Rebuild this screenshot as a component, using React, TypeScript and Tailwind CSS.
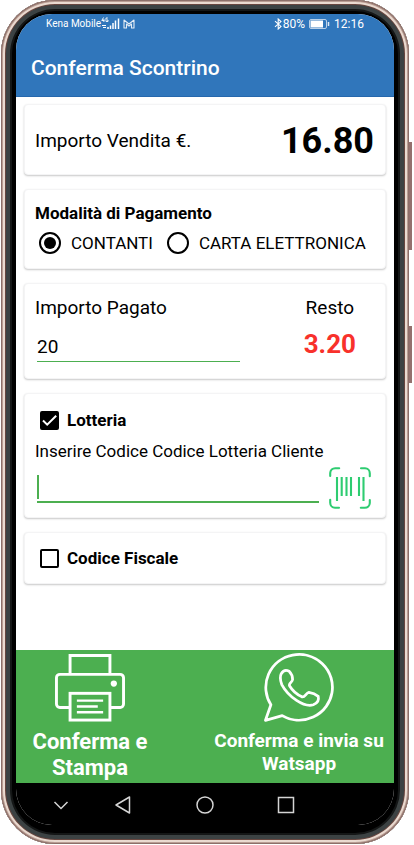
import { useState, type ReactNode } from "react";

function Card({ children, className = "" }: { children: ReactNode; className?: string }) {
  return (
    <section
      className={`rounded-sm border border-zinc-100 bg-white pr-[11px] pl-[10px] shadow-[0_1px_2px_rgba(0,0,0,0.22)] ${className}`}
    >
      {children}
    </section>
  );
}

function SignalIcon() {
  return (
    <svg width="19" height="13" viewBox="0 0 19 13" fill="none" stroke="#fff" aria-hidden="true">
      <path d="M2.500 0.500L0.800 3.500h2.600M2.900 2v3M6.800 1H5v3.500h2V3H6" strokeWidth="0.900" />
      <path d="M1 8.500h4M2 10.500h3" strokeWidth="1.200" />
      <path d="M7 12v-2M9.500 12V8.500M12 12V6M14.500 12V3.500M17.500 12V1.500" strokeWidth="1.500" />
    </svg>
  );
}

function MailIcon() {
  return (
    <svg width="12" height="10" viewBox="0 0 12 10" fill="none" stroke="#e4edf6" strokeWidth="1.100" aria-hidden="true">
      <path d="M3.500 9H1V1L6 5 11 1V9H8.500V5L6 7.200 3.500 5Z" strokeLinejoin="round" />
    </svg>
  );
}

function BluetoothIcon() {
  return (
    <svg width="9" height="12" viewBox="0 0 9 12" fill="none" stroke="#fff" strokeWidth="1.100" aria-hidden="true">
      <path d="M1 3.200l6 5.200L4.200 11V1L7 3.600 1 8.800" />
    </svg>
  );
}

function BatteryIcon() {
  return (
    <svg width="21" height="10" viewBox="0 0 21 10" fill="none" aria-hidden="true">
      <rect x="0.500" y="0.500" width="17" height="9" rx="1.500" stroke="#b9d0e8" />
      <rect x="1.500" y="1.500" width="12.500" height="7" fill="#fff" />
      <path d="M19.500 3v4" stroke="#dce8f4" strokeWidth="1.500" />
    </svg>
  );
}

function BarcodeIcon() {
  return (
    <svg width="42" height="42" viewBox="0 0 42 42" fill="none" stroke="#2ecc71" strokeWidth="2.100" strokeLinecap="round" aria-hidden="true">
      <path d="M1.200 9V6a5 5 0 0 1 5-4.800h4M32 1.200h4a5 5 0 0 1 4.800 5v3M40.800 33v3a5 5 0 0 1-5 4.800h-4M10 40.800H6a5 5 0 0 1-4.800-5v-3" />
      <path d="M8 10v24M12.700 10v19M17.500 10v19M22 10v19M30 10v19M34.500 10v24" strokeLinecap="butt" />
    </svg>
  );
}

function PrinterIcon() {
  return (
    <svg width="70" height="69" viewBox="0 0 72 70" fill="none" stroke="#fff" strokeWidth="3" aria-hidden="true">
      <path d="M15.500 21V2h41v19" />
      <path d="M15.500 55.500H5a3.500 3.500 0 0 1-3.500-3.500V25A3.500 3.500 0 0 1 5 21.500h62a3.500 3.500 0 0 1 3.500 3.500v27a3.500 3.500 0 0 1-3.500 3.500H56.500" />
      <rect x="15.500" y="41" width="41" height="27.500" />
      <path d="M22.500 48.500h27M22.500 54.500h21.500M22.500 60.500h27" strokeWidth="2.500" />
      <circle cx="60.500" cy="31" r="3.200" fill="#fff" stroke="none" />
    </svg>
  );
}

function WhatsappIcon() {
  return (
    <svg width="72" height="69" viewBox="0 0 72 70" fill="none" stroke="#fff" strokeWidth="2.800" strokeLinejoin="round" aria-hidden="true">
      <path d="M7.500 52.500A33.800 33.300 0 1 1 19 63.500L2 68.300Z" />
      <path d="M18 21c2-3.500 5-4 8-2.500 2 2 3.500 6 3.500 8.500-.5 3-4.500 4-3 6.500 3 5 7 8.500 12.500 11 3 1 4-4 7-4.500 3 .5 7 2 9.500 4 1 4-1 7-5 8.500-5 1.500-11-.5-17-4.500-7-4.500-12-10.500-15-16-1.500-4-2-8-.5-11Z" />
    </svg>
  );
}

function CheckRow({ label, checked, onChange }: { label: string; checked: boolean; onChange: (value: boolean) => void }) {
  return (
    <label className="flex items-center gap-2 pl-[5px] text-[17px] leading-5 font-bold">
      <span className="grid">
        <input
          type="checkbox"
          checked={checked}
          onChange={(e) => onChange(e.target.checked)}
          className="col-start-1 row-start-1 size-[19px] appearance-none rounded-xs border-2 border-black checked:bg-black"
        />
        {checked && (
          <svg viewBox="0 0 19 19" className="pointer-events-none col-start-1 row-start-1 size-[19px]" fill="none" stroke="#fff" strokeWidth="2" aria-hidden="true">
            <path d="M3 9.500l4.200 4.200 9-9" />
          </svg>
        )}
      </span>
      {label}
    </label>
  );
}

const radioClass =
  "grid size-[22px] appearance-none place-items-center rounded-full border-2 border-black before:size-3 before:rounded-full checked:before:bg-black";

export default function App() {
  const [payment, setPayment] = useState("contanti");
  const [paid, setPaid] = useState("20");
  const [lottery, setLottery] = useState(true);
  const [lotteryCode, setLotteryCode] = useState("");
  const [fiscalCode, setFiscalCode] = useState(false);

  return (
    <div className="relative flex min-h-screen bg-white pr-[5px] pb-px pl-px font-[Roboto,sans-serif] text-black">
      {/* Side keys */}
      <div className="absolute top-[142px] right-[2px] h-[108px] w-1 bg-[#94706d]" />
      <div className="absolute top-[326px] right-[2px] h-[57px] w-1 bg-[#94706d]" />

      {/* Phone body */}
      <div className="relative flex flex-1 flex-col rounded-[54px] bg-black px-[15px] pt-[14px] pb-[19px] shadow-[inset_0_0_0_1px_#8c6f69,inset_0_0_0_2px_#b99d93,inset_0_0_0_4px_#eadad0,inset_0_0_0_5px_#67463f,inset_0_0_0_9px_#3c4243,inset_0_0_0_11px_#141616]">
        <div className="flex flex-1 flex-col overflow-hidden rounded-[36px] bg-white">
          <header className="border-b border-[#2668ad] bg-[#3076bb] text-white">
            <div className="flex items-center justify-between px-[30px] pt-[3px] text-xs leading-3">
              <div className="flex items-center">
                <span className="text-[10px]">Kena Mobile</span>
                <SignalIcon />
                <span className="pl-[3px]">
                  <MailIcon />
                </span>
              </div>
              <div className="flex items-center gap-1">
                <span className="flex items-center">
                  <BluetoothIcon />
                  80%
                </span>
                <BatteryIcon />
                <span>12:16</span>
              </div>
            </div>
            <h1 className="px-[15px] pt-[26px] pb-4 text-[21px] leading-6 font-medium">Conferma Scontrino</h1>
          </header>

          <main className="flex flex-1 flex-col gap-[14px] px-2 pt-[7px]">
            <Card className="flex items-center justify-between pt-4 pb-3">
              <span className="text-[19px]">Importo Vendita €.</span>
              <span className="text-4xl leading-[41px] font-bold">16.80</span>
            </Card>

            <Card className="pt-[11px] pb-[13px]">
              <fieldset>
                <legend className="text-[17px] leading-6 font-bold">Modalità di Pagamento</legend>
                <div className="flex items-center gap-[14px] pt-[6px] pl-1 text-[17px] leading-6">
                  <label className="flex items-center gap-[10px] whitespace-nowrap">
                    <input
                      type="radio"
                      name="payment"
                      checked={payment === "contanti"}
                      onChange={() => setPayment("contanti")}
                      className={radioClass}
                    />
                    CONTANTI
                  </label>
                  <label className="flex items-center gap-[10px] whitespace-nowrap">
                    <input
                      type="radio"
                      name="payment"
                      checked={payment === "carta"}
                      onChange={() => setPayment("carta")}
                      className={radioClass}
                    />
                    CARTA ELETTRONICA
                  </label>
                </div>
              </fieldset>
            </Card>

            <Card className="flex justify-between pt-3 pb-4">
              <div className="w-3/5">
                <label htmlFor="paid" className="block text-[19px] leading-6">
                  Importo Pagato
                </label>
                <input
                  id="paid"
                  value={paid}
                  onChange={(e) => setPaid(e.target.value)}
                  className="mt-3 ml-[2px] block h-[30px] w-full border-b border-[#4caf50] text-[19px] outline-none"
                />
              </div>
              <div className="pr-[18px] text-center">
                <div className="text-[19px] leading-6">Resto</div>
                <div className="mt-2 text-[26px] leading-8 font-bold text-[#f8312b]">3.20</div>
              </div>
            </Card>

            <Card className="pt-4 pb-2">
              <CheckRow label="Lotteria" checked={lottery} onChange={setLottery} />
              <label htmlFor="lottery-code" className="block pt-[9px] text-[17px] leading-6">
                Inserire Codice Codice Lotteria Cliente
              </label>
              <div className="flex gap-[10px] pt-1 pr-[3px] pl-[2px]">
                <div className="relative flex-1">
                  <input
                    id="lottery-code"
                    value={lotteryCode}
                    onChange={(e) => setLotteryCode(e.target.value)}
                    className="block h-9 w-full border-b-2 border-[#4caf50] pl-1 text-[19px] outline-none"
                  />
                  {lotteryCode === "" && (
                    <span className="pointer-events-none absolute top-2 left-0 h-6 w-[2px] bg-[#4caf50]" />
                  )}
                </div>
                <button type="button" aria-label="Scansiona codice">
                  <BarcodeIcon />
                </button>
              </div>
            </Card>

            <Card className="py-[15px]">
              <CheckRow label="Codice Fiscale" checked={fiscalCode} onChange={setFiscalCode} />
            </Card>
          </main>

          <footer>
            <div className="flex items-start justify-between bg-[#4caf50] pt-[3px] pr-[6px] pb-[2px] pl-[15px] font-bold text-white">
              <button type="button" className="flex w-[118px] flex-col items-center text-[22px] leading-[26px]">
                <PrinterIcon />
                <span className="pt-[7px]">Conferma e Stampa</span>
              </button>
              <button type="button" className="flex w-[178px] flex-col items-center text-[19px] leading-[23px]">
                <WhatsappIcon />
                <span className="pt-[7px]">Conferma e invia su Watsapp</span>
              </button>
            </div>
            <nav className="flex items-center bg-black pt-[10px] pb-2 pl-[37px]">
              <button type="button" aria-label="Nascondi">
                <svg width="16" height="24" viewBox="0 0 16 24" fill="none" stroke="#d4d4d4" strokeWidth="1.500">
                  <path d="M1.500 9l6.500 6.500L14.500 9" />
                </svg>
              </button>
              <button type="button" aria-label="Indietro" className="ml-[45px]">
                <svg width="18" height="24" viewBox="0 0 18 24" fill="none" stroke="#d4d4d4" strokeWidth="1.500" strokeLinejoin="round">
                  <path d="M15.500 4v16L2 12Z" />
                </svg>
              </button>
              <button type="button" aria-label="Home" className="ml-[63px]">
                <svg width="20" height="24" viewBox="0 0 20 24" fill="none" stroke="#d4d4d4" strokeWidth="1.500">
                  <circle cx="10" cy="12" r="8" />
                </svg>
              </button>
              <button type="button" aria-label="Recenti" className="ml-[62px]">
                <svg width="18" height="24" viewBox="0 0 18 24" fill="none" stroke="#d4d4d4" strokeWidth="1.500">
                  <rect x="1.500" y="4.500" width="15" height="15" />
                </svg>
              </button>
            </nav>
          </footer>
        </div>
      </div>
    </div>
  );
}
